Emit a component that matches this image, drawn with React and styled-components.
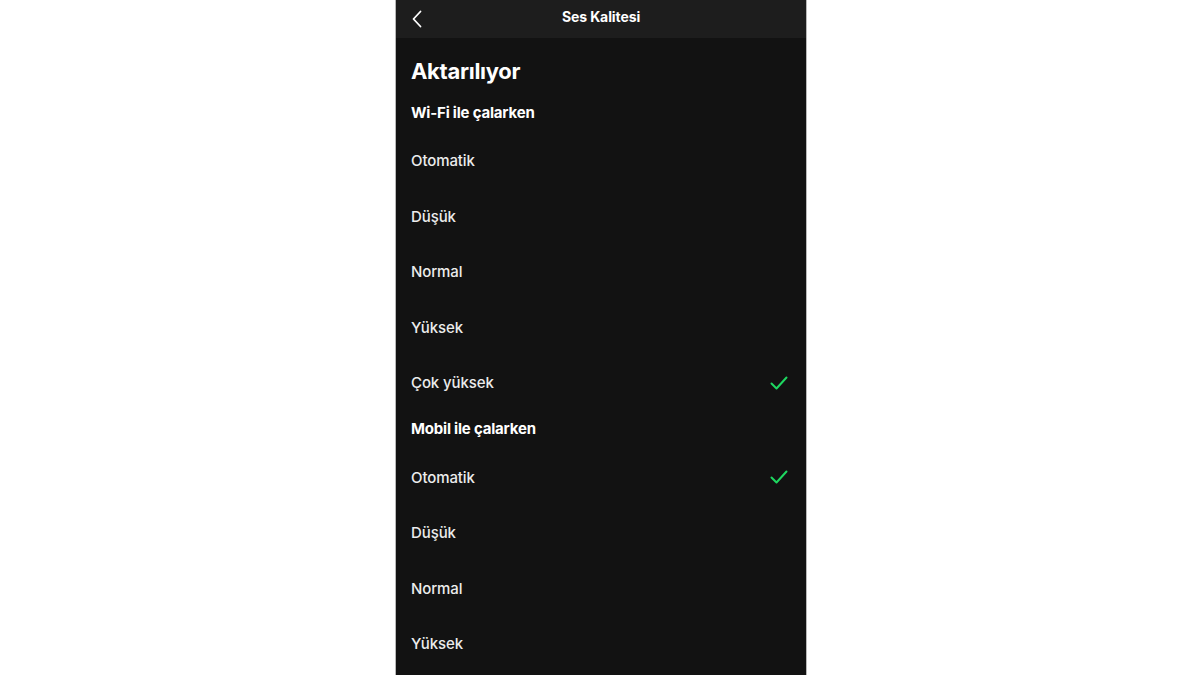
import React from "react";
import styled, { createGlobalStyle } from "styled-components";

const GlobalStyle = createGlobalStyle`
  html, body {
    margin: 0;
    padding: 0;
    background: #ffffff;
  }
  body {
    font-family: Inter, "Noto Sans", "Liberation Sans", sans-serif;
    -webkit-font-smoothing: antialiased;
  }
`;

const Stage = styled.div`
  display: flex;
  justify-content: center;
  height: 675px;
  overflow: hidden;
`;

const Phone = styled.div`
  width: 410px;
  height: 675px;
  background: #121212;
  border-left: 1px solid #b8b8b8;
  border-right: 1px solid #b8b8b8;
  margin-left: 2px;
  display: flex;
  flex-direction: column;
  overflow: hidden;
`;

const TopBar = styled.header`
  height: 38px;
  flex: none;
  background: #1d1d1d;
  display: grid;
  grid-template-columns: 40px 1fr 40px;
  align-items: center;
`;

const BackButton = styled.button`
  border: 0;
  background: none;
  padding: 0 0 0 16px;
  height: 100%;
  display: flex;
  align-items: center;
  color: #ffffff;
  cursor: pointer;
`;

const TopTitle = styled.h1`
  margin: 0;
  text-align: center;
  color: #ffffff;
  font-size: 14px;
  font-weight: 700;
  letter-spacing: -0.1px;
  padding-bottom: 6px;
`;

const Content = styled.div`
  padding: 19px 17px 0 15px;
  display: flex;
  flex-direction: column;
`;

const PageTitle = styled.h2`
  margin: 0 0 10px;
  color: #ffffff;
  font-size: 22px;
  line-height: 28px;
  font-weight: 700;
  letter-spacing: -0.3px;
`;

const SectionLabel = styled.h3`
  margin: 8px 0 ${(p) => p.$after}px;
  height: 20px;
  line-height: 20px;
  color: #ffffff;
  font-size: 15px;
  font-weight: 700;
  letter-spacing: -0.2px;
`;

const Option = styled.div`
  height: 55.5px;
  display: flex;
  align-items: center;
  justify-content: space-between;
  color: #ececec;
  font-size: 15px;
  font-weight: 500;
  letter-spacing: -0.1px;
`;

const Check = styled.svg`
  width: 18px;
  height: 14px;
  margin-right: 1px;
`;

const ChevronLeft = () => (
  <svg width="10" height="18" viewBox="0 0 10 18" fill="none">
    <path d="M8.5 1.5L1.5 9l7 7.5" stroke="#fff" strokeWidth="1.8" strokeLinecap="round" strokeLinejoin="round" />
  </svg>
);

const CheckMark = () => (
  <Check viewBox="0 0 18 14" fill="none">
    <path d="M1.5 7.5l5 5L16.5 1.5" stroke="#1ed760" strokeWidth="2" strokeLinecap="round" strokeLinejoin="round" />
  </Check>
);

const sections = [
  {
    label: "Wi-Fi ile çalarken",
    options: ["Otomatik", "Düşük", "Normal", "Yüksek", "Çok yüksek"],
    selected: "Çok yüksek",
    after: 10,
  },
  {
    label: "Mobil ile çalarken",
    options: ["Otomatik", "Düşük", "Normal", "Yüksek"],
    selected: "Otomatik",
    after: 11,
  },
];

export default function App() {
  return (
    <>
      <GlobalStyle />
      <Stage>
        <Phone>
          <TopBar>
            <BackButton aria-label="Geri">
              <ChevronLeft />
            </BackButton>
            <TopTitle>Ses Kalitesi</TopTitle>
            <span />
          </TopBar>
          <Content>
            <PageTitle>Aktarılıyor</PageTitle>
            {sections.map((s) => (
              <React.Fragment key={s.label}>
                <SectionLabel $after={s.after}>{s.label}</SectionLabel>
                {s.options.map((o) => (
                  <Option key={o}>
                    <span>{o}</span>
                    {s.selected === o && <CheckMark />}
                  </Option>
                ))}
              </React.Fragment>
            ))}
          </Content>
        </Phone>
      </Stage>
    </>
  );
}
